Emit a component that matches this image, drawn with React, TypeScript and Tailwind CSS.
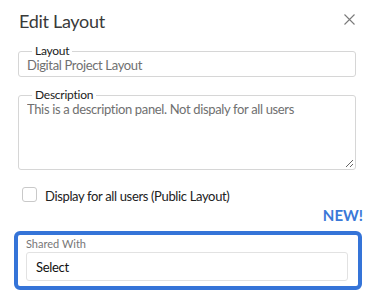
import React from 'react';

const font = "font-['Lato','Open_Sans',sans-serif]";

const CloseIcon: React.FC = () => (
    <svg width="11" height="11" viewBox="0 0 11 11" className="mt-[7px]">
        <path d="M0.5 0.5 L10.5 10.5 M10.5 0.5 L0.5 10.5" stroke="#7a7a7a" strokeWidth="1.1" fill="none" />
    </svg>
);

export default function App() {
    return (
        <div className={`w-[374px] h-[306px] bg-white overflow-hidden ${font}`}>
            <div className="flex items-start justify-between pl-[19px] pr-[19px] pt-[7px]">
                <h1 className="text-[18px] leading-[28px] tracking-[-0.3px] text-[#3a3a3a]">Edit Layout</h1>
                <CloseIcon />
            </div>

            <fieldset className="mx-[18px] mt-[10px] border border-[#d6d6d6] rounded-[3px] pl-[8px] pr-[8px] pb-[3px]">
                <legend className="ml-[5px] px-[3px] text-[12px] leading-[12px] tracking-[-0.25px] text-[#222]">Layout</legend>
                <div className="text-[13px] leading-[16px] tracking-[-0.35px] text-[#707070]">Digital Project Layout</div>
            </fieldset>

            <fieldset className="mx-[18px] mt-[12px] border border-[#d6d6d6] rounded-[3px] pl-[8px] pr-[1px] pb-[1px]">
                <legend className="ml-[5px] px-[3px] text-[12px] leading-[12px] tracking-[-0.25px] text-[#222]">Description</legend>
                <textarea
                    readOnly
                    defaultValue="This is a description panel. Not dispaly for all users"
                    className="block w-full h-[67px] resize-y bg-transparent outline-none text-[13px] leading-[16px] tracking-[-0.35px] text-[#707070]"
                />
            </fieldset>

            <label className="flex items-start ml-[22px] mt-[17px]">
                <span className="w-[15px] h-[15px] rounded-[3px] border border-[#c9c9c9] bg-white" />
                <span className="ml-[8px] mt-[1px] text-[13px] leading-[16px] tracking-[-0.35px] text-[#222]">
                    Display for all users (Public Layout)
                </span>
            </label>

            <div className="mt-[2px] pr-[11px] text-right text-[15px] leading-[18px] font-bold text-[#3a78d8]">NEW!</div>

            <div className="ml-[14px] mr-[12px] mt-[7px] border-[4px] border-[#3574d8] rounded-[6px] pl-[8px] pr-[10px] pt-[2px] pb-[5px]">
                <div className="text-[11px] leading-[13px] text-[#777]">Shared With</div>
                <div className="mt-[2px] h-[29px] flex items-center border border-[#e2e2e2] rounded-[3px] pl-[9px] text-[13px] leading-[16px] tracking-[-0.3px] text-[#111]">
                    Select
                </div>
            </div>
        </div>
    );
}
